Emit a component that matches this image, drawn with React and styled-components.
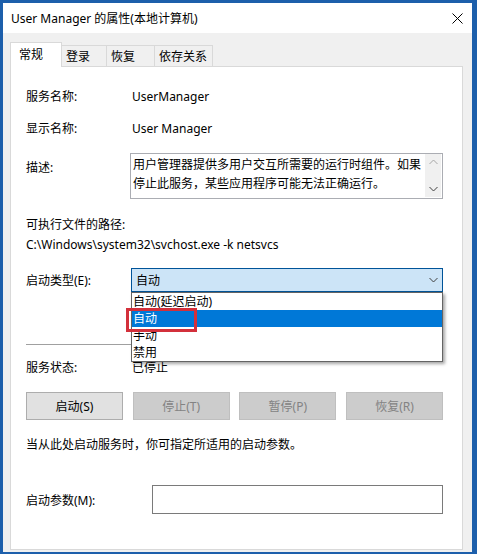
import styled, { createGlobalStyle } from "styled-components";

const GlobalStyle = createGlobalStyle`
  html, body {
    margin: 0;
    padding: 0;
    background: #ffffff;
  }
  * {
    box-sizing: border-box;
  }
`;

const Window = styled.div`
  width: 477px;
  height: 554px;
  display: flex;
  flex-direction: column;
  background: #f0f0f0;
  border-style: solid;
  border-color: #1d5fab;
  border-width: 3px 5px 2px 3px;
  font-family: "Noto Sans", "Noto Sans CJK SC", sans-serif;
  font-size: 12px;
  color: #000;
`;

const TitleBar = styled.div`
  height: 30px;
  flex-shrink: 0;
  display: flex;
  align-items: center;
  justify-content: space-between;
  background: #ffffff;
  padding: 0 9px 0 8px;
`;

const Title = styled.span`
  font-size: 12px;
  line-height: 1;
  padding-top: 1px;
`;

const Body = styled.div`
  flex: 1;
  display: flex;
  flex-direction: column;
  padding: 10px 9px 2px 7px;
`;

const TabRow = styled.div`
  display: flex;
  align-items: flex-end;
  height: 24px;
  margin-bottom: -1px;
  position: relative;
  z-index: 1;
`;

const Tab = styled.div`
  width: ${(p) => p.$w}px;
  height: ${(p) => (p.$active ? 25 : 22)}px;
  display: flex;
  align-items: center;
  padding-left: ${(p) => (p.$active ? 8 : 4)}px;
  padding-bottom: ${(p) => (p.$active ? 2 : 0)}px;
  background: ${(p) => (p.$active ? "#ffffff" : "#f0f0f0")};
  border: 1px solid #d9d9d9;
  border-bottom: ${(p) => (p.$active ? "none" : "1px solid #d9d9d9")};
  margin-left: ${(p) => (p.$active ? 0 : -1)}px;
`;

const Panel = styled.div`
  flex: 1;
  background: #ffffff;
  border: 1px solid #d9d9d9;
  padding: 19px 19px 0 15px;
  display: flex;
  flex-direction: column;
`;

const Row = styled.div`
  display: flex;
  align-items: ${(p) => p.$align || "center"};
  min-height: 20px;
  margin-top: ${(p) => p.$mt || 0}px;
  white-space: nowrap;
`;

const Label = styled.div`
  width: ${(p) => p.$w || 106}px;
  flex-shrink: 0;
  padding-top: ${(p) => p.$pt || 0}px;
`;

const DescBox = styled.div`
  width: 313px;
  height: 46px;
  display: flex;
  border: 1px solid #abadb3;
`;

const DescText = styled.div`
  flex: 1;
  padding: 1px 2px;
  line-height: 19px;
  white-space: nowrap;
  overflow: hidden;
`;

const ScrollBar = styled.div`
  width: 16px;
  margin: 0 1px 1px 0;
  background: #f0f0f0;
  display: flex;
  flex-direction: column;
  justify-content: space-between;
  align-items: center;
  padding: 5px 0 5px;
`;

const Combo = styled.div`
  position: relative;
  width: 312px;
  height: 24px;
  display: flex;
  align-items: center;
  justify-content: space-between;
  padding: 0 4px 0 4px;
  background: #cce4f7;
  border: 1px solid #005499;
  z-index: 5;
`;

const DropList = styled.div`
  position: absolute;
  top: 23px;
  left: -1px;
  width: 312px;
  background: #ffffff;
  border: 1px solid #646464;
  box-shadow: 2px 2px 3px rgba(0, 0, 0, 0.35);
  display: flex;
  flex-direction: column;
`;

const Option = styled.div`
  height: 17px;
  line-height: 17px;
  padding-left: 1px;
  background: ${(p) => (p.$selected ? "#0078d7" : "transparent")};
  color: ${(p) => (p.$selected ? "#ffffff" : "#000")};
`;

const RedMark = styled.div`
  position: absolute;
  left: -6px;
  top: 15px;
  width: 71px;
  height: 24px;
  border: 3px solid #d3303b;
`;

const Separator = styled.div`
  height: 1px;
  background: #a0a0a0;
  margin-top: 52px;
`;

const ButtonRow = styled.div`
  display: flex;
  justify-content: space-between;
  margin-top: 15px;
`;

const Button = styled.div`
  width: 97px;
  height: 28px;
  display: flex;
  align-items: center;
  justify-content: center;
  background: ${(p) => (p.$disabled ? "#cccccc" : "#e1e1e1")};
  border: 1px solid ${(p) => (p.$disabled ? "#bfbfbf" : "#adadad")};
  color: ${(p) => (p.$disabled ? "#838383" : "#000")};
`;

const Input = styled.div`
  width: 291px;
  height: 29px;
  border: 1px solid #7a7a7a;
  background: #ffffff;
`;

const Chevron = ({ up }) => (
  <svg width="9" height="6" viewBox="0 0 9 6">
    <polyline
      points={up ? "0.5,5 4.5,1 8.5,5" : "0.5,1 4.5,5 8.5,1"}
      fill="none"
      stroke={up ? "#a6a6a6" : "#404040"}
      strokeWidth="1"
    />
  </svg>
);

const CloseIcon = () => (
  <svg width="11" height="11" viewBox="0 0 11 11">
    <path d="M0.5 0.5 L10.5 10.5 M10.5 0.5 L0.5 10.5" stroke="#000" strokeWidth="1" />
  </svg>
);

export default function App() {
  return (
    <>
      <GlobalStyle />
      <Window>
        <TitleBar>
          <Title>User Manager 的属性(本地计算机)</Title>
          <CloseIcon />
        </TitleBar>
        <Body>
          <TabRow>
            <Tab $active $w={52}>常规</Tab>
            <Tab $w={46}>登录</Tab>
            <Tab $w={49}>恢复</Tab>
            <Tab $w={59}>依存关系</Tab>
          </TabRow>
          <Panel>
            <Row>
              <Label>服务名称:</Label>
              <span>UserManager</span>
            </Row>
            <Row $mt={12}>
              <Label>显示名称:</Label>
              <span>User Manager</span>
            </Row>
            <Row $mt={15} $align="flex-start">
              <Label $w={104} $pt={5}>描述:</Label>
              <DescBox>
                <DescText>
                  用户管理器提供多用户交互所需要的运行时组件。如果
                  <br />
                  停止此服务，某些应用程序可能无法正确运行。
                </DescText>
                <ScrollBar>
                  <Chevron up />
                  <Chevron up={false} />
                </ScrollBar>
              </DescBox>
            </Row>
            <Row $mt={15}>可执行文件的路径:</Row>
            <Row>C:\Windows\system32\svchost.exe -k netsvcs</Row>
            <Row $mt={14}>
              <Label $w={105}>启动类型(E):</Label>
              <Combo>
                <span>自动</span>
                <Chevron up={false} />
                <DropList>
                  <Option>自动(延迟启动)</Option>
                  <Option $selected>自动</Option>
                  <Option>手动</Option>
                  <Option>禁用</Option>
                  <RedMark />
                </DropList>
              </Combo>
            </Row>
            <Separator />
            <Row $mt={12}>
              <Label>服务状态:</Label>
              <span>已停止</span>
            </Row>
            <ButtonRow>
              <Button>启动(S)</Button>
              <Button $disabled>停止(T)</Button>
              <Button $disabled>暂停(P)</Button>
              <Button $disabled>恢复(R)</Button>
            </ButtonRow>
            <Row $mt={14}>当从此处启动服务时，你可指定所适用的启动参数。</Row>
            <Row $mt={31}>
              <Label $w={126}>启动参数(M):</Label>
              <Input />
            </Row>
          </Panel>
        </Body>
      </Window>
    </>
  );
}
